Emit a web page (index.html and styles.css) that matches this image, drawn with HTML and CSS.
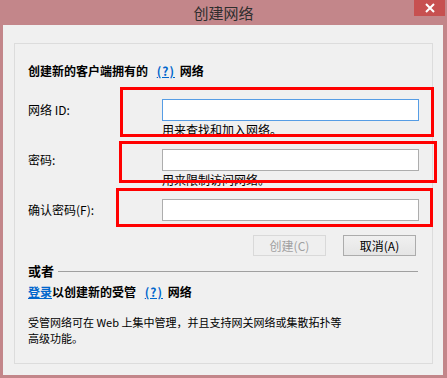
FILE: index.html
```html
<!DOCTYPE html>
<html lang="zh-CN">

<head>
  <meta charset="UTF-8">
  <title>创建网络</title>
  <link rel="stylesheet" href="styles.css">
</head>

<body>
  <div class="window">
    <div class="titlebar">
      <span class="title">创建网络</span>
      <button class="close" aria-label="关闭">
        <svg width="10" height="10" viewBox="0 0 10 10">
          <path d="M1 1 L9 9 M9 1 L1 9" stroke="#fff" stroke-width="2" />
        </svg>
      </button>
    </div>

    <div class="content">
      <div class="group">
        <div class="heading">创建新的客户端拥有的 <a href="#" class="help">(?)</a> 网络</div>

        <div class="field">
          <label for="net-id">网络 ID:</label>
          <input type="text" id="net-id" class="focused">
          <span class="hint">用来查找和加入网络。</span>
        </div>

        <div class="field">
          <label for="pwd">密码:</label>
          <input type="password" id="pwd">
          <span class="hint">用来限制访问网络。</span>
        </div>

        <div class="field last">
          <label for="pwd2">确认密码(F):</label>
          <input type="password" id="pwd2">
        </div>

        <div class="actions">
          <button class="btn" disabled>创建(C)</button>
          <button class="btn">取消(A)</button>
        </div>

        <div class="divider">
          <span>或者</span>
          <div class="rule"></div>
        </div>

        <div class="managed"><a href="#" class="link">登录</a>以创建新的受管 <a href="#" class="help">(?)</a> 网络</div>

        <p class="desc">受管网络可在 Web 上集中管理，并且支持网关网络或集散拓扑等<br>高级功能。</p>

        <!-- annotation boxes -->
        <div class="mark mark-1"></div>
        <div class="mark mark-2"></div>
        <div class="mark mark-3"></div>
      </div>
    </div>
  </div>
</body>

</html>
```

FILE: styles.css
```css
body {
  margin: 0;
  width: 447px;
  height: 378px;
  background-color: #c3868a;
  font-family: "Noto Sans CJK SC", "Noto Sans", sans-serif;
  font-size: 12px;
  color: #000;
  overflow: hidden;
}

.window {
  display: flex;
  flex-direction: column;
}

.titlebar {
  position: relative;
  height: 25px;
  display: flex;
  align-items: center;
  justify-content: center;
}

.title {
  font-size: 15px;
  color: #2e2e2e;
  line-height: 22px;
}

.close {
  position: absolute;
  top: 0;
  right: 2px;
  width: 31px;
  height: 16px;
  padding: 0;
  border: none;
  background-color: #c75050;
  display: flex;
  align-items: center;
  justify-content: center;
}

.content {
  margin: 0 4px 0 3px;
  height: 350px;
  background-color: #f0f0f0;
  padding: 18px 10px 0 11px;
  box-sizing: border-box;
}

.group {
  position: relative;
  height: 321px;
  box-sizing: border-box;
  border: 1px solid #dcdcdc;
  padding: 0 0 0 13px;
}

.heading,
.managed {
  font-weight: bold;
  line-height: 16px;
}

.heading {
  margin-top: 19px;
}

.help,
.link {
  color: #0066cc;
  font-weight: bold;
  text-decoration: underline;
}

.help {
  margin: 0 2px 0 6px;
  letter-spacing: 1px;
}

.field {
  display: grid;
  grid-template-columns: 134px 257px;
  align-items: center;
  margin-top: 20px;
}

.field + .field {
  margin-top: 11px;
}

.field label {
  line-height: 16px;
}

.field input {
  height: 22px;
  box-sizing: border-box;
  border: 1px solid #adadad;
  background: #fff;
  margin: 0;
  padding: 0 4px;
}

.field input.focused {
  border-color: #569de5;
}

.hint {
  grid-column: 2;
  line-height: 16px;
  padding-top: 1px;
}

.actions {
  display: flex;
  justify-content: flex-end;
  gap: 17px;
  width: 388px;
  margin-top: 14px;
}

.btn {
  width: 73px;
  height: 21px;
  padding: 0;
  font-family: inherit;
  font-size: 12px;
  color: #000;
  border: 1px solid #acacac;
  background: linear-gradient(#f0f0f0, #e5e5e5);
}

.btn:disabled {
  color: #a0a0a0;
  border-color: #d9d9d9;
  background: #efefef;
}

.divider {
  display: flex;
  align-items: center;
  gap: 4px;
  width: 390px;
  margin-top: 7px;
}

.divider span {
  font-weight: bold;
  font-size: 13px;
  line-height: 16px;
}

.rule {
  flex: 1;
  height: 1px;
  background-color: #a0a0a0;
}

.managed {
  margin-top: 5px;
}

.desc {
  margin: 14px 0 0;
  line-height: 16px;
  font-size: 11px;
}

.mark {
  position: absolute;
  box-sizing: border-box;
  border: 3px solid #ff0000;
}

.mark-1 {
  left: 105px;
  top: 43px;
  width: 314px;
  height: 50px;
}

.mark-2 {
  left: 104px;
  top: 97px;
  width: 318px;
  height: 42px;
}

.mark-3 {
  left: 101px;
  top: 144px;
  width: 317px;
  height: 39px;
}
```
